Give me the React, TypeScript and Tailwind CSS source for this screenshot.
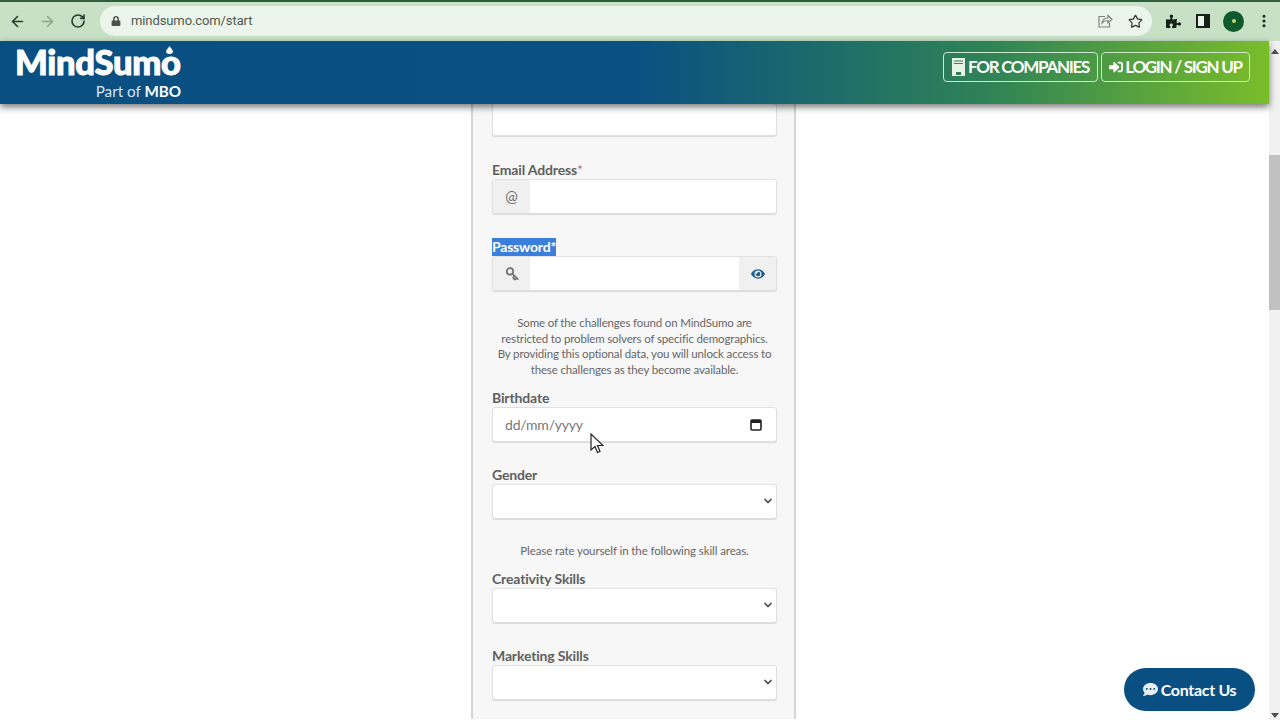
import React from "react";
import { ArrowLeft, ArrowRight, RotateCw, Star, MoreVertical, Key, ChevronDown } from "lucide-react";
import { FaEye, FaCommentDots, FaSignInAlt, FaPuzzlePiece, FaLock } from "react-icons/fa";

function Label({ children, star }: { children: React.ReactNode; star?: boolean }) {
  return (
    <div className="h-[18px] text-[14px] leading-[18px] font-bold text-[#5f5f5f] tracking-[-0.15px]">
      {children}
      {star && <span className="text-[#a87a7a] font-normal">*</span>}
    </div>
  );
}

function Box({ children, h = "h-[35px]" }: { children?: React.ReactNode; h?: string }) {
  return (
    <div className={`${h} w-[285px] flex items-center rounded-[3px] bg-white border border-[#e0e0e0] shadow-[0_1px_1px_rgba(0,0,0,0.12)] overflow-hidden`}>
      {children}
    </div>
  );
}

function Addon({ children }: { children: React.ReactNode }) {
  return (
    <div className="w-[37px] h-full shrink-0 bg-[#f0f0f0] flex items-center justify-center text-[#6f6f6f]">
      {children}
    </div>
  );
}

function SelectBox() {
  return (
    <Box>
      <div className="flex-1" />
      <ChevronDown size={12} strokeWidth={3.5} className="mr-[2px] text-[#4a4a4a]" />
    </Box>
  );
}

export default function App() {
  return (
    <div className="relative w-[1280px] h-[720px] overflow-hidden bg-white font-['Lato',sans-serif]">
      {/* browser chrome */}
      <div className="h-[41px] bg-[#c7e0c6] border-t-2 border-[#2d5f3f] flex items-center pl-[9px] pr-[8px] pb-[1px]">
        <ArrowLeft size={17} strokeWidth={2.2} className="text-[#2a3a2e]" />
        <ArrowRight size={17} strokeWidth={2} className="ml-[13px] text-[#8aa58c]" />
        <RotateCw size={16} strokeWidth={2.4} className="ml-[14px] text-[#2a3a2e]" />
        <div className="ml-[14px] w-[1052px] shrink-0 h-[30px] rounded-full bg-[#ecf5ec] flex items-center pl-[11px] pr-[9px]">
          <FaLock size={10} className="text-[#4a544c]" />
          <span className="ml-[10px] text-[13px] text-[#4d5a50] font-['Roboto',sans-serif] tracking-[-0.1px]">mindsumo.com/start</span>
          <div className="flex-1" />
          <svg width="16" height="16" viewBox="0 0 16 16" fill="none" stroke="#7a857b" strokeWidth="1.2">
            <path d="M8 3.500H2v10.500h10.500v-4" />
            <path d="M5 10c.5-3 2.500-5 6-5V2.500L15 6.300 11 10V7.500C8.500 7.500 6.500 8.300 5 10z" />
          </svg>
          <Star size={15} strokeWidth={2} className="ml-[15px] text-[#2f3a32]" />
        </div>
        <FaPuzzlePiece size={15} className="ml-[14px] text-[#172019]" />
        <div className="ml-[15px] w-[14px] h-[14px] border-2 border-[#172019] border-r-[6px] bg-[#e8f2e8]" />
        <div className="ml-[13px] w-[21px] h-[21px] rounded-full bg-[#0e5a2c] flex items-center justify-center">
          <div className="w-[4px] h-[4px] rounded-full bg-[#c9d66b]" />
        </div>
        <MoreVertical size={16} strokeWidth={2.6} className="ml-[12px] text-[#1c2a20]" />
      </div>

      <div className="flex h-[679px]">
        <div className="relative w-[1269px] flex flex-col">
          {/* site header */}
          <header className="relative z-10 h-[63px] shrink-0 flex items-start pl-[15px] pr-[19px] bg-[linear-gradient(90deg,#0a4f82_0%,#0a5082_50%,#2f8356_78%,#7abd2a_100%)] shadow-[0_3px_7px_rgba(0,0,0,0.55)]">
            <div className="relative w-[167px] h-[60px] text-white">
              <div className="text-[34.5px] leading-[36px] mt-[3px] font-black tracking-[-0.3px] whitespace-nowrap [-webkit-text-stroke:1px_white]">MindSumo</div>
              <svg className="absolute left-[150px] top-[5px]" width="9" height="8" viewBox="0 0 9 8" fill="#fff">
                <path d="M4.500 0L8 5a3.500 3 0 0 1-7 0z" />
              </svg>
              <div className="absolute right-[1px] top-[41px] text-[15.2px] leading-[18px] text-[#d5e6f0]">
                Part of <span className="font-bold text-white">MBO</span>
              </div>
            </div>
            <div className="flex-1" />
            <a className="mt-[11px] h-[30px] w-[155px] flex items-center justify-center gap-[3px] rounded-[4px] border border-[#cfe6cf] text-white text-[17px] font-bold tracking-[-1.3px]">
              <svg width="13" height="18" viewBox="0 0 13 18" fill="#e6f3e6">
                <path d="M0 0h13v18H0zM2 2.500v1h9v-1zM2 5v1h9V5zM4 14v3h5v-3z" fillRule="evenodd" />
              </svg>
              FOR COMPANIES
            </a>
            <a className="mt-[11px] ml-[3px] h-[30px] w-[149px] flex items-center justify-center gap-[2px] rounded-[4px] border border-[#cfe6cf] text-white text-[17px] font-bold tracking-[-1.3px]">
              <FaSignInAlt size={14} />
              LOGIN / SIGN UP
            </a>
          </header>

          {/* page body */}
          <main className="flex-1 overflow-hidden">
            <div className="ml-[471px] w-[325px] h-full bg-[#f7f7f7] border-x-2 border-[#d4d4d4] pl-[19px] -mt-[1px]">
              <Box h="h-[33px]" />
              <div className="mt-[25px]"><Label star>Email Address</Label></div>
              <Box>
                <Addon><span className="text-[15px]">@</span></Addon>
              </Box>
              <div className="mt-[24px] h-[18px] flex">
                <span className="h-[18px] text-[14px] leading-[18px] font-bold text-white bg-[#3a7fdc] tracking-[-0.2px]">Password*</span>
              </div>
              <Box>
                <Addon><Key size={14} strokeWidth={2.8} className="rotate-90" /></Addon>
                <div className="flex-1" />
                <Addon><FaEye size={14} className="text-[#1f5f8f]" /></Addon>
              </Box>
              <p className="mt-[24px] w-[285px] text-center text-[11.5px] leading-[15.7px] text-[#666] tracking-[-0.15px] whitespace-nowrap">
                Some of the challenges found on MindSumo are<br />
                restricted to problem solvers of specific demographics.<br />
                By providing this optional data, you will unlock access to<br />
                these challenges as they become available.
              </p>
              <div className="mt-[11px]"><Label>Birthdate</Label></div>
              <Box>
                <span className="ml-[12px] text-[14px] text-[#777] tracking-[-0.2px]">dd/mm/yyyy</span>
                <div className="flex-1" />
                <svg width="12" height="13" viewBox="0 0 12 13" className="mr-[14px]" fill="none" stroke="#222" strokeWidth="1.6">
                  <rect x="1" y="2" width="10" height="10" rx="1" />
                  <path d="M1 3.500h10" strokeWidth="3" />
                </svg>
              </Box>
              <div className="mt-[24px]"><Label>Gender</Label></div>
              <SelectBox />
              <p className="mt-[24px] w-[285px] text-center text-[11.5px] leading-[15px] text-[#666] tracking-[-0.1px] whitespace-nowrap">
                Please rate yourself in the following skill areas.
              </p>
              <div className="mt-[12px]"><Label>Creativity Skills</Label></div>
              <SelectBox />
              <div className="mt-[24px]"><Label>Marketing Skills</Label></div>
              <SelectBox />
            </div>
          </main>
        </div>

        {/* scrollbar */}
        <div className="relative w-[11px] bg-[#f1f1f1] flex flex-col items-center">
          <div className="mt-[8px] w-0 h-0 border-x-[4px] border-x-transparent border-b-[5px] border-b-[#505050]" />
          <div className="mt-[101px] w-full h-[155px] bg-[#c1c1c1]" />
          <div className="flex-1" />
          <div className="mb-[2px] w-0 h-0 border-x-[4px] border-x-transparent border-t-[5px] border-t-[#505050]" />
        </div>
      </div>

      {/* contact button */}
      <div className="absolute left-[1124px] top-[668px] w-[131px] h-[43px] rounded-full bg-[#0a4f82] flex items-center justify-center gap-[3px] text-white text-[16px] font-bold tracking-[-0.3px]">
        <FaCommentDots size={15} className="text-[#e8f0f5]" />
        Contact Us
      </div>

      {/* mouse cursor */}
      <svg className="absolute left-[590px] top-[433px]" width="14" height="22" viewBox="0 0 14 22">
        <path d="M1 1v16l4-3.500 2.500 6 2.500-1-2.500-6H13z" fill="#fff" stroke="#222" strokeWidth="1.200" />
      </svg>
    </div>
  );
}
